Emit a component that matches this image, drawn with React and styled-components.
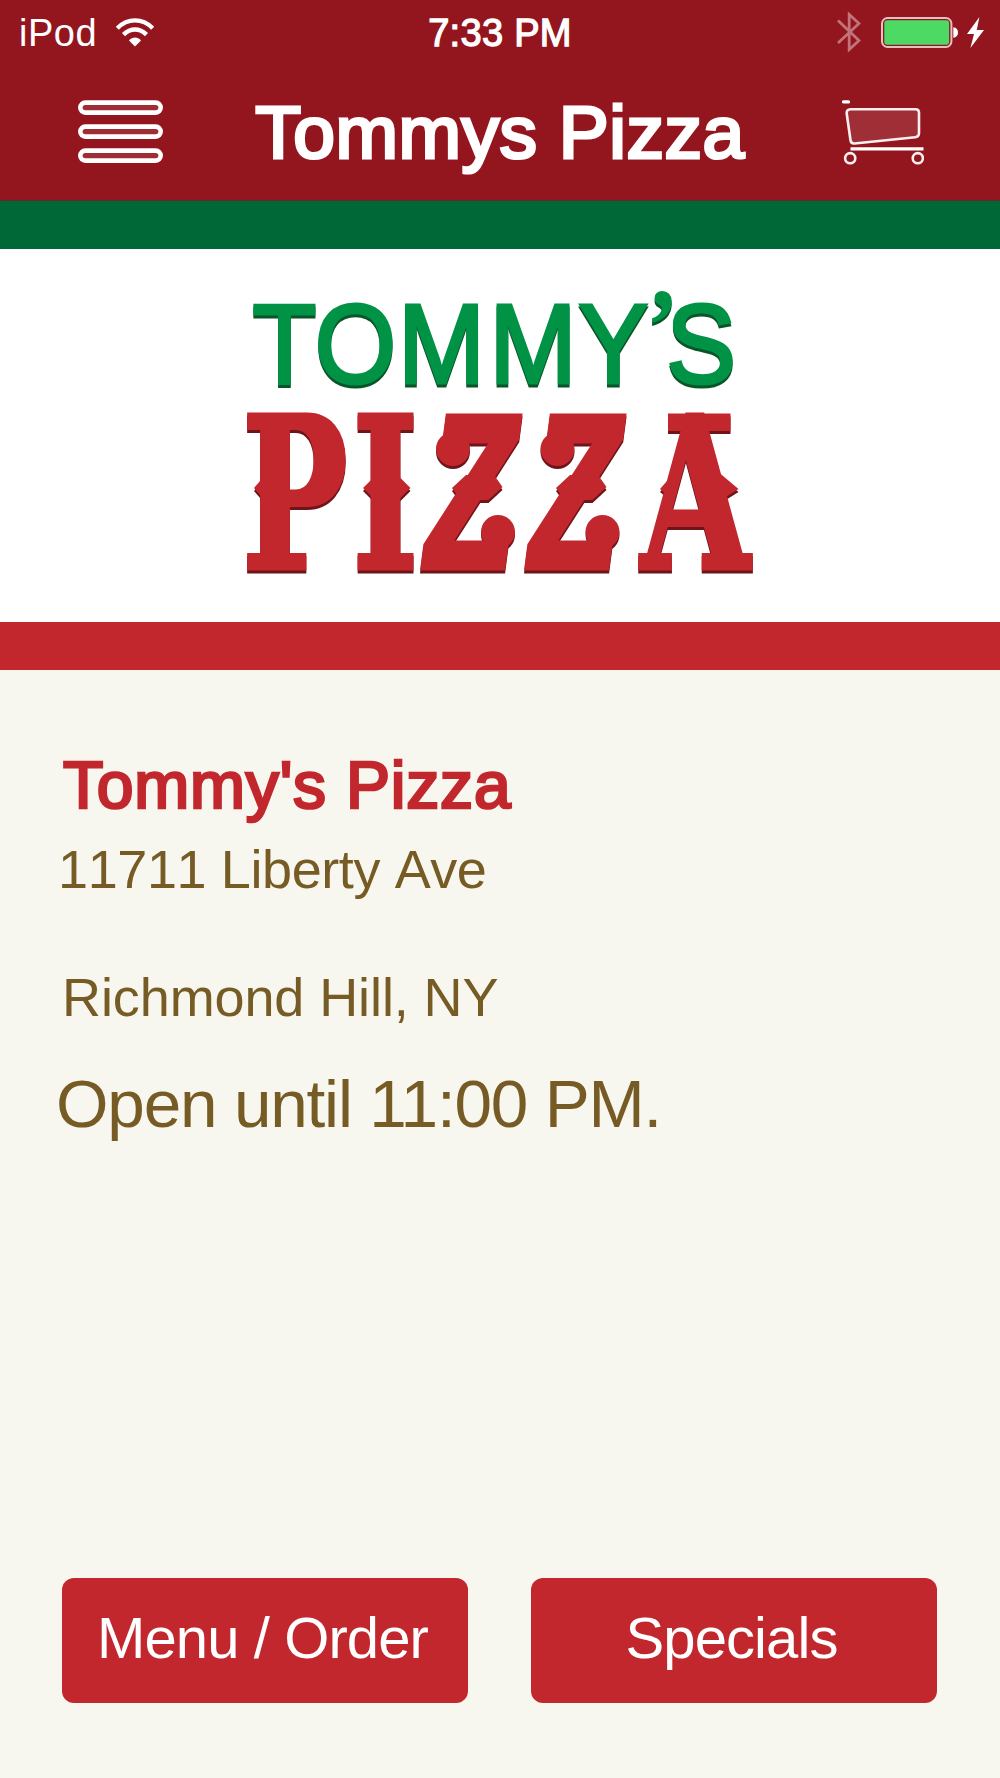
import React from "react";
import styled, { createGlobalStyle } from "styled-components";

const GlobalStyle = createGlobalStyle`
  html, body {
    margin: 0;
    padding: 0;
    background: #f7f6ef;
  }
  * {
    box-sizing: border-box;
  }
`;

const WifiIcon = () => (
  <svg width="38" height="29" viewBox="0 0 38 29" fill="none" stroke="#fff">
    <path d="M1.3 10.2C11.5 -0.3 26.5 -0.3 36.7 10.2" strokeWidth="4.4" />
    <path d="M7.5 16.6C14.5 9.8 23.5 9.8 30.5 16.6" strokeWidth="4.4" />
    <path d="M13 22.4C16.5 18.6 21.5 18.6 25 22.4L19 28.4Z" fill="#fff" stroke="none" />
  </svg>
);

const BluetoothIcon = () => (
  <svg width="24" height="42" viewBox="0 0 24 42" fill="none" stroke="#c27379" strokeWidth="2.8">
    <path d="M1 9.5L22 29.5L12.2 38.5V3.5L22 12.5L1 32" />
  </svg>
);

const BatteryIcon = () => (
  <svg width="78" height="31" viewBox="0 0 78 31">
    <rect x="1" y="1" width="69.4" height="29" rx="5.5" fill="none" stroke="#e6bfc2" strokeWidth="2" />
    <rect x="3.3" y="3.3" width="64.8" height="24.4" rx="3" fill="#4cd964" />
    <path d="M72.3 10.2C75.6 10.5 77 12.5 77 15.5S75.6 20.4 72.3 20.7Z" fill="#fff" />
  </svg>
);

const BoltIcon = () => (
  <svg width="17" height="31" viewBox="0 0 17 31">
    <path d="M12.4 0L0 17H7L3.4 31L17 13H9.8Z" fill="#fff" />
  </svg>
);

const MenuIcon = () => (
  <svg width="85" height="63" viewBox="0 0 85 63" fill="#9f2d36" stroke="#fff" strokeWidth="4.6">
    <rect x="2.3" y="2.6" width="80.4" height="10" rx="5" />
    <rect x="2.3" y="26.6" width="80.4" height="10" rx="5" />
    <rect x="2.3" y="50.6" width="80.4" height="10" rx="5" />
  </svg>
);

const CartIcon = () => (
  <svg width="82" height="66" viewBox="0 0 82 66" fill="none" stroke="#fbeff0" strokeWidth="2.6">
    <path d="M1.5 2.9H6.5" strokeWidth="3.4" stroke="#fff" strokeLinecap="round" />
    <path
      d="M8.5 10.2H73.5Q77 10.2 77 13.7V34Q77 37.8 73.2 38.2L12.5 44.5Q9 44.8 8.5 41.3L4.7 14.5Q4.4 10.2 8.5 10.2Z"
      fill="#9f2e37"
    />
    <path d="M8.5 49.8H81.5" strokeWidth="3.2" stroke="#fff" />
    <circle cx="8.2" cy="59.2" r="5.1" />
    <circle cx="75.8" cy="59.2" r="5.1" />
  </svg>
);

const Logo = () => (
  <LogoArt viewBox="240 249 520 373">
    <Raised shade="#0a5527">
      <TommyWord transform="scale(0.93 1)" x="305.9 382.3 474.7 573.1 659.5 712.4 753.8" y="383">
        TOMMY<Apostrophe dy="-21">’</Apostrophe><tspan dy="21">S</tspan>
      </TommyWord>
    </Raised>
    <Raised shade="#6f151a">
      <PizzaWord transform="translate(245 568) scale(0.67 1)" x="-4 161">
        PI<Zed x="337 492">ZZ</Zed><tspan x="591">A</tspan>
      </PizzaWord>
      {/* spurs half way up the letters */}
      <path d="M254 488l12-14v28z" />
      <path d="M363 488l14-14v28zM410.5 488l-14-14v28z" />
      <path d="M452 488l14-13h28l8.5 12l-14 13h-28z" />
      <path d="M556 488l14-13h28l8.5 12l-14 13h-28z" />
      <path d="M660 489l14-16v28zM738.5 489l-19-16v28z" />
      {/* slab over the A */}
      <path d="M668 413.500H730.500V431H668z" />
      {/* curls */}
      <circle cx="453" cy="449" r="17" />
      <circle cx="498" cy="532" r="17" />
      <circle cx="557.500" cy="449" r="17" />
      <circle cx="602.500" cy="532" r="17" />
    </Raised>
  </LogoArt>
);

export default function App() {
  return (
    <Screen>
      <GlobalStyle />
      <Header>
        <StatusBar>
          <StatusGroup>
            <Carrier>iPod</Carrier>
            <WifiIcon />
          </StatusGroup>
          <Clock>7:33 PM</Clock>
          <StatusGroup className="right">
            <BluetoothIcon />
            <BatteryIcon />
            <BoltIcon />
          </StatusGroup>
        </StatusBar>
        <NavBar>
          <MenuIcon />
          <Title>Tommys Pizza</Title>
          <CartIcon />
        </NavBar>
      </Header>
      <Banner>
        <Logo />
      </Banner>
      <Info>
        <StoreName>Tommy's Pizza</StoreName>
        <Address gap="12px" spacing="-0.4px">11711 Liberty Ave</Address>
        <Address gap="64px" indent="4px" spacing="-0.1px">Richmond Hill, NY</Address>
        <Hours>Open until 11:00 PM.</Hours>
      </Info>
      <Actions>
        <Button>Menu / Order</Button>
        <Button>Specials</Button>
      </Actions>
    </Screen>
  );
}

const Screen = styled.main`
  width: 1000px;
  height: 1778px;
  display: flex;
  flex-direction: column;
  background: #f7f6ef;
  font-family: "Liberation Sans", Arial, sans-serif;
  overflow: hidden;
`;
const Header = styled.header`
  height: 201px;
  background: #93161f;
  border-bottom: 1px solid #4f3526;
  color: #fff;
`;
const StatusBar = styled.div`
  height: 64px;
  padding: 0 16px 0 19px;
  display: grid;
  grid-template-columns: 1fr auto 1fr;
  align-items: center;
`;
const StatusGroup = styled.div`
  display: flex;
  align-items: center;
  gap: 19px;
  &.right {
    justify-content: flex-end;
    gap: 8px;
  }
  &.right svg:first-child {
    margin-right: 12px;
  }
`;
const Carrier = styled.span`
  font-size: 38px;
  line-height: 44px;
  margin-top: 1px;
  letter-spacing: 0.5px;
`;
const Clock = styled.span`
  font-size: 38px;
  line-height: 44px;
  margin: 1px 3px 0 0;
  letter-spacing: 0.3px;
  -webkit-text-stroke: 1.3px #fff;
`;
const NavBar = styled.div`
  height: 135px;
  padding: 0 76px 0 78px;
  display: flex;
  align-items: center;
  justify-content: space-between;
`;
const Title = styled.h1`
  margin: 1px 5px 0 0;
  font-size: 75px;
  font-weight: normal;
  line-height: 90px;
  letter-spacing: 0.5px;
  -webkit-text-stroke: 3.2px #fff;
`;
const Banner = styled.section`
  height: 469px;
  display: flex;
  justify-content: center;
  background: #fff;
  border-top: 48px solid #006837;
  border-bottom: 48px solid #c1272d;
`;
const LogoArt = styled.svg`
  width: 520px;
  height: 373px;
`;
const Raised = styled.g`
  fill: #c1272d;
  filter: drop-shadow(0 3.500px 0 ${props => props.shade});
`;
const TommyWord = styled.text`
  font-size: 112.5px;
  text-anchor: middle;
  fill: #009245;
  stroke: #009245;
  stroke-width: 3.2px;
`;
const Apostrophe = styled.tspan`
  font-family: "Liberation Serif", serif;
  font-weight: bold;
  font-size: 106px;
  stroke-width: 0;
`;
const PizzaWord = styled.text`
  font-family: "DejaVu Serif", serif;
  font-weight: bold;
  font-size: 209px;
  stroke: #c1272d;
  stroke-width: 5px;
`;
const Zed = styled.tspan`
  font-family: "Liberation Sans", sans-serif;
  font-size: 221px;
  font-style: italic;
  text-anchor: middle;
`;
const Info = styled.section`
  flex: 1;
  padding: 75px 58px 0;
`;
const StoreName = styled.h2`
  margin: 0 0 0 5px;
  font-size: 66px;
  font-weight: normal;
  line-height: 80px;
  letter-spacing: 0.8px;
  color: #c1272d;
  -webkit-text-stroke: 2.7px #c1272d;
`;
const Address = styled.p`
  margin: ${props => props.gap} 0 0 ${props => props.indent || "0"};
  font-size: 54px;
  font-kerning: none;
  line-height: 64px;
  letter-spacing: ${props => props.spacing};
  color: #775b24;
`;
const Hours = styled.p`
  margin: 35px 0 0 -2px;
  font-size: 67.5px;
  line-height: 80px;
  letter-spacing: -1.2px;
  color: #775b24;
`;
const Actions = styled.div`
  display: flex;
  justify-content: space-between;
  padding: 0 63px 75.5px 62px;
`;
const Button = styled.button`
  width: 406px;
  height: 125px;
  padding: 0 5px 5px 0;
  border: none;
  border-radius: 12px;
  background: #c1272d;
  color: #fff;
  font-family: inherit;
  font-size: 58px;
  letter-spacing: -0.9px;
`;
